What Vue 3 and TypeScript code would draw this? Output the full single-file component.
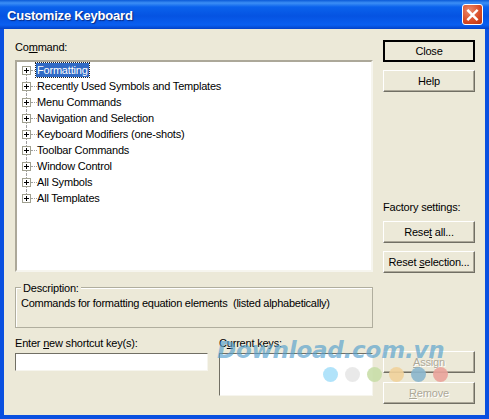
<script setup lang="ts">
const nodes = [
  'Formatting',
  'Recently Used Symbols and Templates',
  'Menu Commands',
  'Navigation and Selection',
  'Keyboard Modifiers (one-shots)',
  'Toolbar Commands',
  'Window Control',
  'All Symbols',
  'All Templates',
]
const dots = ['#a9e0fa', '#e7e7e7', '#c9dea9', '#f1d29b', '#8bb6cd', '#eaa39b']
</script>

<template>
  <div class="win">
    <div class="titlebar">
      <span class="title">Customize Keyboard</span>
      <button class="x" type="button" aria-label="Close">
        <svg viewBox="0 0 20 20" width="20" height="20"><path d="M5.5 5.5l9 9M14.5 5.5l-9 9" stroke="#fff" stroke-width="2.6" stroke-linecap="square" /></svg>
      </button>
    </div>
    <div class="client">
      <div class="left">
        <div class="lbl">Co<u>m</u>mand:</div>
        <div class="tree">
          <div v-for="(n, i) in nodes" :key="n" class="row" :class="{ last: i === nodes.length - 1, first: i === 0 }">
            <span class="hline"></span>
            <span class="plus"></span>
            <span class="txt" :class="{ sel: i === 0 }">{{ n }}</span>
          </div>
        </div>
        <div class="desc">
          <span class="legend">Description:</span>
          <div class="desc-text">Commands for formatting equation elements&nbsp; (listed alphabetically)</div>
        </div>
        <div class="bottom">
          <div class="field short">
            <div class="lbl">Enter <u>n</u>ew shortcut key(s):</div>
            <input class="inp" type="text" />
          </div>
          <div class="field">
            <div class="lbl">C<u>u</u>rrent keys:</div>
            <div class="keys"></div>
          </div>
        </div>
      </div>
      <div class="right">
        <button class="btn def" type="button">Close</button>
        <button class="btn" type="button">Help</button>
        <div class="factory">Factory settings:</div>
        <button class="btn" type="button">Rese<u>t</u> all...</button>
        <button class="btn" type="button">Reset <u>s</u>election...</button>
        <button class="btn dis assign" type="button"><u>A</u>ssign</button>
        <button class="btn dis" type="button"><u>R</u>emove</button>
      </div>
    </div>
    <div class="mark">Download.com.vn</div>
    <div class="dots">
      <i v-for="c in dots" :key="c" :style="{ background: c }"></i>
    </div>
  </div>
</template>

<style scoped>
.win {
  position: relative; width: 489px; height: 419px; box-sizing: border-box; overflow: hidden;
  display: flex; flex-direction: column; background: #0a50e0;
  font: 11px/14px "Liberation Sans", Arial, sans-serif; letter-spacing: -.2px; color: #000;
}
.titlebar {
  height: 29px; flex: none; display: flex; align-items: center; justify-content: space-between; padding: 0 6px 0 7px;
  background: linear-gradient(180deg, #0a5ad8 0, #3c8ff5 3px, #0a62ec 7px, #0553e2 16px, #0a5ff0 25px, #0342c8 29px);
}
.title { color: #fff; font: bold 13px "Liberation Sans", sans-serif; text-shadow: 1px 1px 1px #0a2a80; letter-spacing: -.2px; padding-top: 1px; }
.x {
  width: 21px; height: 21px; padding: 0; border: 1px solid #fff; border-radius: 3px;
  background: radial-gradient(circle at 35% 30%, #ec8a6c, #d84a24 60%, #b83210); display: flex; align-items: center; justify-content: center;
}
.client {
  flex: 1; margin: 0 4px 4px; background: #ece9d8; padding: 11px 10px 0 11px;
  display: flex; gap: 10px; min-height: 0;
}
.left { width: 358px; flex: none; }
.lbl { height: 14px; margin-bottom: 6px; }
.tree {
  height: 212px; box-sizing: border-box; background: #fff; overflow: hidden; padding-left: 2px;
  border: 2px solid; border-color: #aca899 #f6f5ee #f6f5ee #aca899;
}
.row { position: relative; height: 16px; display: flex; align-items: center; padding-left: 3px; }
.row::before { content: ''; position: absolute; left: 7px; top: 0; bottom: 0; border-left: 1px dotted #a0a0a0; }
.row.first::before { top: 8px; }
.row.last::before { bottom: 8px; }
.hline { position: absolute; left: 12px; width: 6px; top: 8px; border-top: 1px dotted #a0a0a0; }
.plus {
  position: relative; width: 9px; height: 9px; box-sizing: border-box; border: 1px solid #a0a090; background: #fff;
  background-image: linear-gradient(#000, #000), linear-gradient(#000, #000);
  background-size: 5px 1px, 1px 5px; background-position: center; background-repeat: no-repeat;
}
.txt { position: absolute; left: 17px; padding: 0 1px; height: 14px; white-space: nowrap; }
.txt.sel { background: #316ac5; color: #fff; outline: 1px dotted #222; outline-offset: 0; }
.desc {
  position: relative; margin-top: 15px; padding: 8px 0 0 5px; height: 41px; box-sizing: border-box;
  border: 1px solid #b0ae9e; box-shadow: inset 1px 1px 0 #fff;
}
.desc-text { letter-spacing: -.26px; }
.legend { position: absolute; left: 5px; top: -7px; padding: 0 2px; background: #ece9d8; }
.bottom { display: flex; gap: 11px; margin-top: 8px; }
.field { width: 154px; }
.field.short { width: 193px; }
.bottom .lbl { margin-bottom: 3px; }
.inp {
  display: block; width: 100%; height: 18px; box-sizing: border-box; padding: 0; background: #fff; outline: none;
  border: 1px solid; border-color: #716f64 #f6f5ee #f6f5ee #716f64;
}
.keys {
  height: 43px; box-sizing: border-box; background: #fff;
  border: 1px solid; border-color: #716f64 #f6f5ee #f6f5ee #716f64;
}
.right { width: 92px; flex: none; display: flex; flex-direction: column; }
.btn {
  height: 22px; flex: none; padding: 0; background: #ece9d8; border: 1px solid; border-color: #fff #716f64 #716f64 #fff;
  box-shadow: inset -1px -1px 0 #aca899; font: inherit; letter-spacing: inherit; color: #000; margin-bottom: 8px; white-space: nowrap;
}
.btn.def { border: 2px solid #000; box-shadow: none; outline: none; }
.factory { margin-top: 100px; margin-bottom: 7px; }
.dis { color: #aca899; text-shadow: 1px 1px 0 #fff; }
.assign { margin-top: 70px; margin-bottom: 9px; }
.mark {
  position: absolute; left: 217px; top: 335px; font: italic bold 23px/30px "DejaVu Sans", sans-serif;
  color: rgba(86, 160, 205, .68); letter-spacing: -.2px; white-space: nowrap; pointer-events: none;
}
.dots { position: absolute; left: 323px; top: 367px; display: flex; gap: 7px; pointer-events: none; }
.dots i { width: 15px; height: 15px; border-radius: 50%; opacity: .9; }
</style>

<style>
html, body { background: #fff; }
</style>
